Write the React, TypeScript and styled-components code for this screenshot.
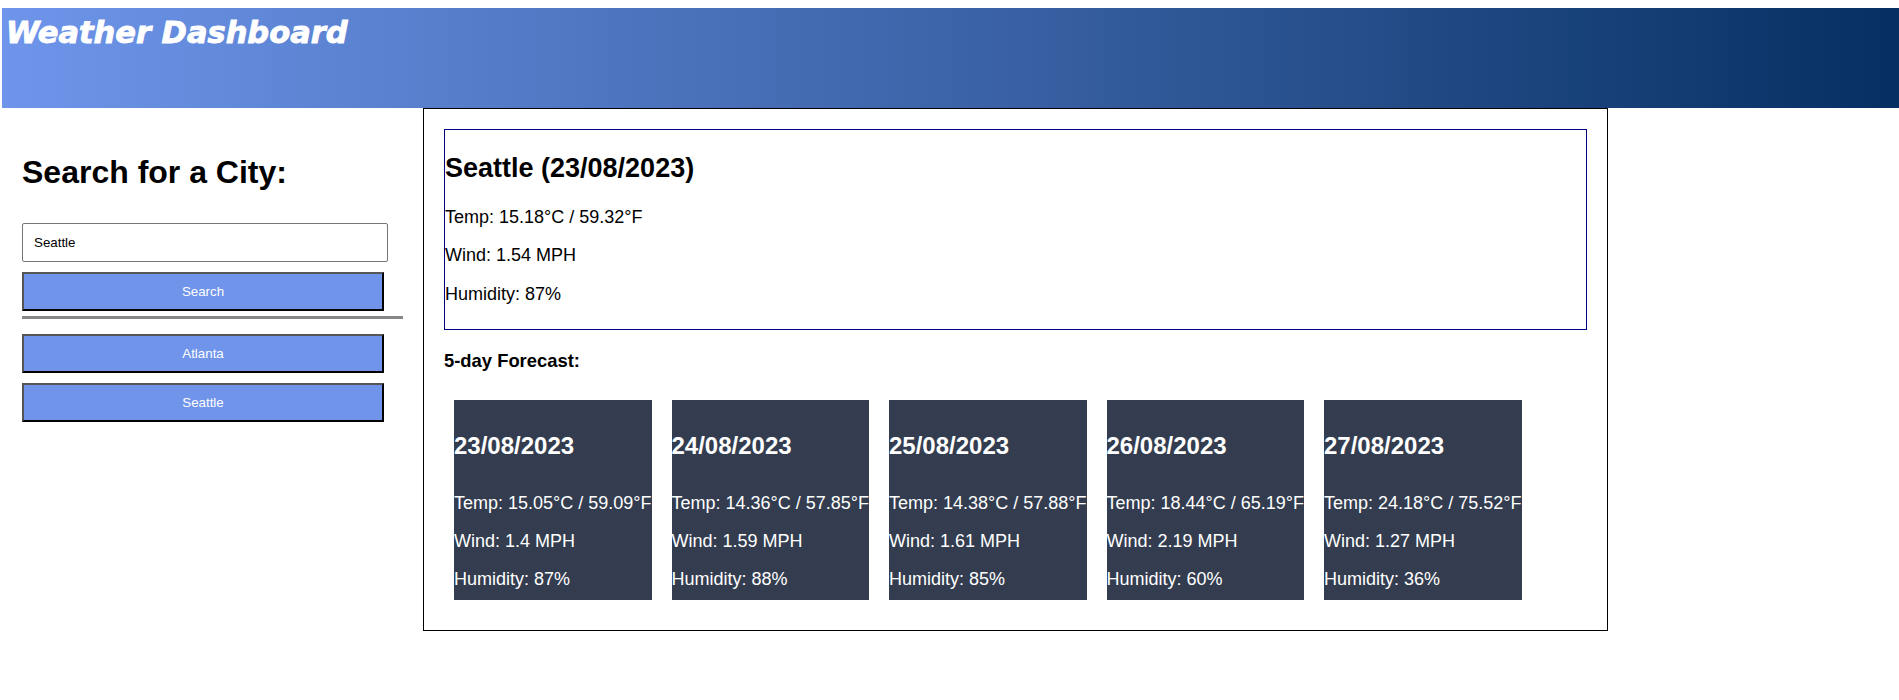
import React from "react";
import styled, { createGlobalStyle } from "styled-components";

const GlobalStyle = createGlobalStyle`
  html, body {
    margin: 0;
    padding: 0;
    background: #ffffff;
  }
  body {
    font-family: "Liberation Sans", Arial, sans-serif;
    color: #000000;
  }
`;

const Header = styled.header`
  margin: 8px 0 0 2px;
  height: 100px;
  box-sizing: border-box;
  padding: 7px 0 0 4px;
  background: linear-gradient(to right, #6e95ea 0%, #3c64a8 50%, #063062 100%);
`;

const Title = styled.h1`
  margin: 0;
  font-family: "DejaVu Sans", "Liberation Sans", sans-serif;
  font-size: 30.5px;
  line-height: 35px;
  font-weight: bold;
  font-style: italic;
  color: #ffffff;
  -webkit-text-stroke: 0.9px #ffffff;
`;

const Layout = styled.div`
  display: flex;
  align-items: flex-start;
`;

const Sidebar = styled.aside`
  width: 381px;
  margin-left: 22px;
  padding-top: 46px;
  display: flex;
  flex-direction: column;
  align-items: flex-start;
`;

const SideHeading = styled.h2`
  margin: 0 0 32px;
  font-size: 32px;
  line-height: 37px;
  font-weight: bold;
`;

const CityInput = styled.input`
  display: block;
  box-sizing: border-box;
  width: 366px;
  height: 39px;
  margin: 0;
  padding: 0 11px;
  border: 1px solid #767676;
  border-radius: 2px;
  font-family: "Liberation Sans", Arial, sans-serif;
  font-size: 13.33px;
  color: #000000;
  background: #ffffff;
  outline: none;
`;

const CityButton = styled.button<{ $gap: number }>`
  display: block;
  box-sizing: border-box;
  width: 362px;
  height: 39px;
  margin: ${(p) => p.$gap}px 0 0;
  padding: 0;
  border-style: solid;
  border-width: 2px;
  border-color: #555555 #000000 #000000 #555555;
  background: #6f94ea;
  color: #ffffff;
  font-family: "Liberation Sans", Arial, sans-serif;
  font-size: 13.33px;
  text-align: center;
  cursor: pointer;
`;

const Divider = styled.hr`
  width: 381px;
  height: 3px;
  margin: 5px 0 0;
  border: none;
  background: #878787;
`;

const Main = styled.main`
  box-sizing: border-box;
  width: 1185px;
  margin-left: 20px;
  padding: 20px;
  border: 1px solid #000000;
`;

const CurrentBox = styled.section`
  border: 1px solid #000080;
  padding: 22.5px 0 24px;
`;

const CityTitle = styled.h2`
  margin: 0 0 23px;
  font-size: 27px;
  line-height: 31px;
  font-weight: bold;
`;

const Stat = styled.p`
  margin: 0 0 18px;
  font-size: 18px;
  line-height: 20.7px;
  &:last-child {
    margin-bottom: 0;
  }
`;

const ForecastHeading = styled.h3`
  margin: 20px 0 19px;
  font-size: 18.4px;
  line-height: 21px;
  font-weight: bold;
`;

const ForecastRow = styled.div`
  display: flex;
  flex-wrap: nowrap;
`;

const ForecastCard = styled.article`
  box-sizing: border-box;
  width: 197.5px;
  height: 200px;
  margin: 10px;
  padding-top: 32.5px;
  background: #333d4f;
  color: #ffffff;
  white-space: nowrap;
`;

const CardDate = styled.h2`
  margin: 0 0 33.6px;
  font-size: 24px;
  line-height: 27.6px;
  font-weight: bold;
`;

const CardStat = styled.p`
  margin: 0 0 17.3px;
  font-size: 18px;
  line-height: 20.7px;
`;

const forecast = [
  { date: "23/08/2023", temp: "15.05°C / 59.09°F", wind: "1.4 MPH", humidity: "87%" },
  { date: "24/08/2023", temp: "14.36°C / 57.85°F", wind: "1.59 MPH", humidity: "88%" },
  { date: "25/08/2023", temp: "14.38°C / 57.88°F", wind: "1.61 MPH", humidity: "85%" },
  { date: "26/08/2023", temp: "18.44°C / 65.19°F", wind: "2.19 MPH", humidity: "60%" },
  { date: "27/08/2023", temp: "24.18°C / 75.52°F", wind: "1.27 MPH", humidity: "36%" },
];

const history = ["Atlanta", "Seattle"];

export default function App() {
  return (
    <>
      <GlobalStyle />
      <Header>
        <Title>Weather Dashboard</Title>
      </Header>
      <Layout>
        <Sidebar>
          <SideHeading>Search for a City:</SideHeading>
          <CityInput type="text" defaultValue="Seattle" />
          <CityButton $gap={10}>Search</CityButton>
          <Divider />
          {history.map((city, i) => (
            <CityButton key={city} $gap={i === 0 ? 15 : 10}>
              {city}
            </CityButton>
          ))}
        </Sidebar>
        <Main>
          <CurrentBox>
            <CityTitle>Seattle (23/08/2023)</CityTitle>
            <Stat>Temp: 15.18°C / 59.32°F</Stat>
            <Stat>Wind: 1.54 MPH</Stat>
            <Stat>Humidity: 87%</Stat>
          </CurrentBox>
          <ForecastHeading>5-day Forecast:</ForecastHeading>
          <ForecastRow>
            {forecast.map((d) => (
              <ForecastCard key={d.date}>
                <CardDate>{d.date}</CardDate>
                <CardStat>Temp: {d.temp}</CardStat>
                <CardStat>Wind: {d.wind}</CardStat>
                <CardStat>Humidity: {d.humidity}</CardStat>
              </ForecastCard>
            ))}
          </ForecastRow>
        </Main>
      </Layout>
    </>
  );
}
